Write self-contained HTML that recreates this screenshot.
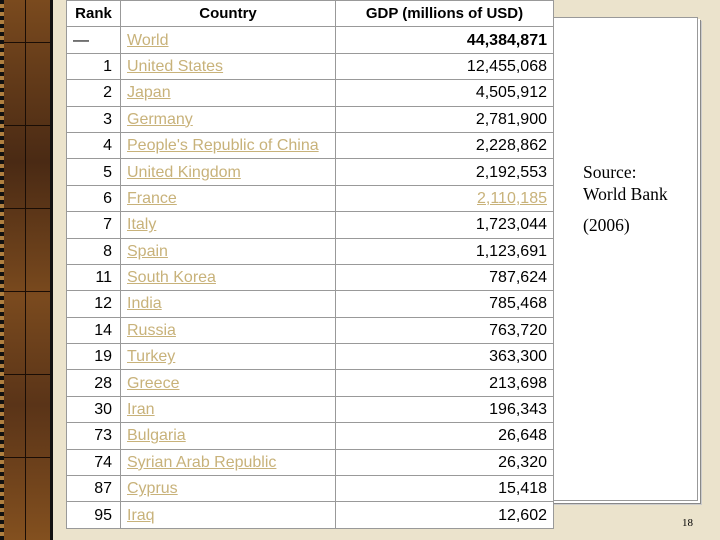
<!DOCTYPE html>
<html><head><style>
body{margin:0;width:720px;height:540px;overflow:hidden;background:#ebe3cc;position:relative;font-family:"Liberation Sans",Arial,sans-serif;}
.strip{position:absolute;left:0;top:0;width:50px;height:540px;border-right:3px solid #111;background:
repeating-linear-gradient(90deg,transparent 0 25px,#1a0d05 25px 26px,transparent 26px 50px),
repeating-linear-gradient(0deg,transparent 0 82px,#1a0d05 82px 83px),
linear-gradient(180deg,#7a4a1e,#4a2a14 30%,#7a4a1e 55%,#5a3418 75%,#83501f);}
.strip:before{content:"";position:absolute;left:0;top:0;width:4px;height:100%;background:repeating-linear-gradient(0deg,#111 0 4px,#b08040 4px 8px);}
.panel{position:absolute;left:540px;top:17px;width:156px;height:482px;background:#fff;border:1px solid #999;box-shadow:2px 2px 0 #fff,3px 3px 0 #888,4px 4px 0 #ccc;}
.src{position:absolute;left:583px;top:161px;font-family:"Liberation Serif",serif;font-size:17.5px;line-height:22px;color:#000;}
.yr{position:absolute;left:583px;top:215px;font-family:"Liberation Serif",serif;font-size:17.5px;}
.pg{position:absolute;left:682px;top:517px;font-family:"Liberation Serif",serif;font-size:11px;}
table{position:absolute;left:66px;top:0;border-collapse:collapse;background:#fff;font-size:16px;table-layout:fixed;width:487px;}
td,th{border:1px solid #999;height:25.4px;padding:0 6px;line-height:16px;overflow:hidden;white-space:nowrap;}
td{padding-top:1px;height:24.4px;}
th{font-weight:bold;font-size:15px;}
td:first-child{text-align:right;padding-right:8px;}
td:nth-child(3){text-align:right;}
a{color:#c8b27a;text-decoration:underline;}
</style></head><body>
<div class="strip"></div>
<div class="panel"></div>
<div class="src">Source:<br>World Bank</div>
<div class="yr">(2006)</div>
<div class="pg">18</div>
<table>
<colgroup><col style="width:54px"><col style="width:215px"><col style="width:218px"></colgroup>
<tr><th>Rank</th><th>Country</th><th>GDP (millions of USD)</th></tr>
<tr><td style="text-align:left">—</td><td><a>World</a></td><td><b>44,384,871</b></td></tr>
<tr><td>1</td><td><a>United States</a></td><td>12,455,068</td></tr>
<tr><td>2</td><td><a>Japan</a></td><td>4,505,912</td></tr>
<tr><td>3</td><td><a>Germany</a></td><td>2,781,900</td></tr>
<tr><td>4</td><td><a>People's Republic of China</a></td><td>2,228,862</td></tr>
<tr><td>5</td><td><a>United Kingdom</a></td><td>2,192,553</td></tr>
<tr><td>6</td><td><a>France</a></td><td><a>2,110,185</a></td></tr>
<tr><td>7</td><td><a>Italy</a></td><td>1,723,044</td></tr>
<tr><td>8</td><td><a>Spain</a></td><td>1,123,691</td></tr>
<tr><td>11</td><td><a>South Korea</a></td><td>787,624</td></tr>
<tr><td>12</td><td><a>India</a></td><td>785,468</td></tr>
<tr><td>14</td><td><a>Russia</a></td><td>763,720</td></tr>
<tr><td>19</td><td><a>Turkey</a></td><td>363,300</td></tr>
<tr><td>28</td><td><a>Greece</a></td><td>213,698</td></tr>
<tr><td>30</td><td><a>Iran</a></td><td>196,343</td></tr>
<tr><td>73</td><td><a>Bulgaria</a></td><td>26,648</td></tr>
<tr><td>74</td><td><a>Syrian Arab Republic</a></td><td>26,320</td></tr>
<tr><td>87</td><td><a>Cyprus</a></td><td>15,418</td></tr>
<tr><td>95</td><td><a>Iraq</a></td><td>12,602</td></tr>
</table>
</body></html>
